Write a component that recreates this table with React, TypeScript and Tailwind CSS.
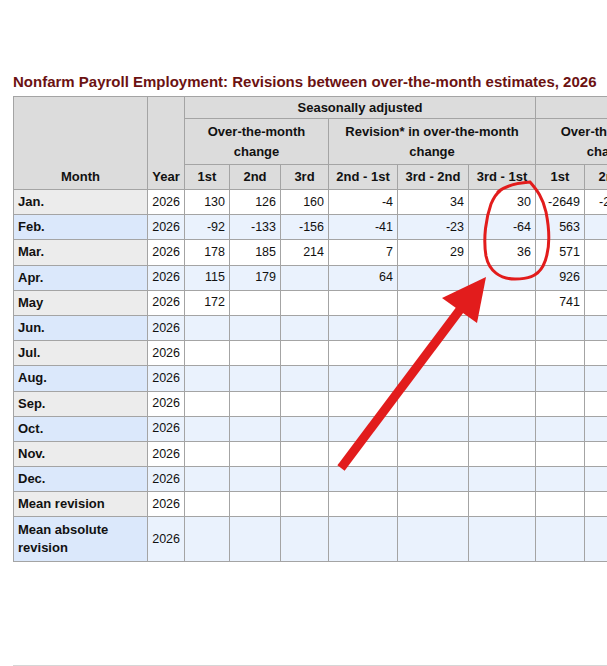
type Row = {
  month: string;
  sa: string[];
  nsa: string[];
  tall?: boolean;
};

const blank = ["", "", "", "", "", ""];

const rows: Row[] = [
  { month: "Jan.", sa: ["130", "126", "160", "-4", "34", "30"], nsa: ["-2649", "-2653", "", "-4", "", ""] },
  { month: "Feb.", sa: ["-92", "-133", "-156", "-41", "-23", "-64"], nsa: ["563", "572", "", "9", "", ""] },
  { month: "Mar.", sa: ["178", "185", "214", "7", "29", "36"], nsa: ["571", "590", "", "19", "", ""] },
  { month: "Apr.", sa: ["115", "179", "", "64", "", ""], nsa: ["926", "988", "", "62", "", ""] },
  { month: "May", sa: ["172", "", "", "", "", ""], nsa: ["741", "", "", "", "", ""] },
  { month: "Jun.", sa: blank, nsa: blank },
  { month: "Jul.", sa: blank, nsa: blank },
  { month: "Aug.", sa: blank, nsa: blank },
  { month: "Sep.", sa: blank, nsa: blank },
  { month: "Oct.", sa: blank, nsa: blank },
  { month: "Nov.", sa: blank, nsa: blank },
  { month: "Dec.", sa: blank, nsa: blank },
  { month: "Mean revision", sa: blank, nsa: blank },
  { month: "Mean absolute revision", sa: blank, nsa: blank, tall: true },
];

const colWidths = [134, 37, 45, 51, 48, 69, 71, 67, 49, 51, 48, 69, 71, 67];
const subHeads = ["1st", "2nd", "3rd", "2nd - 1st", "3rd - 2nd", "3rd - 1st"];

const th = "border border-[#a4a4a4] bg-[#dcdcdc] font-bold text-[13px] text-[#111] text-center";
const td = "border border-[#a4a4a4] text-right pr-[4px] text-[12.5px] text-[#111]";

function Annotations() {
  return (
    <svg
      className="absolute left-0 top-0 pointer-events-none"
      width="607"
      height="666"
      viewBox="0 0 607 666"
    >
      {/* circle around the 3rd - 1st figures */}
      <path
        d="M498 192 C506 185 517 183 530 182 C537 190 543 198 546 212 C550 232 550 252 543 266 C537 277 527 279 515 279 C500 279 489 271 486 256 C483 238 486 218 491 204 C494 197 497 193 500 191"
        fill="none"
        stroke="#e21c1c"
        strokeWidth="3"
        strokeLinecap="round"
      />
      {/* arrow pointing at it */}
      <line x1="341" y1="468" x2="462" y2="307" stroke="#e21c1c" strokeWidth="9" />
      <polygon points="442,298 486,277 477,323" fill="#e21c1c" />
    </svg>
  );
}

export default function App() {
  return (
    <div
      className="relative w-[607px] h-[666px] overflow-hidden bg-white"
      style={{ fontFamily: '"Liberation Sans", Arial, sans-serif' }}
    >
      <div className="pt-[73px] pl-[13px]">
        <h2 className="h-[18px] leading-[18px] text-[15px] font-bold text-[#6b1212] whitespace-nowrap mb-[5px]">
          Nonfarm Payroll Employment: Revisions between over-the-month estimates, 2026
        </h2>

        <table className="border-collapse table-fixed w-[877px]">
          <colgroup>
            {colWidths.map((w, i) => (
              <col key={i} style={{ width: w }} />
            ))}
          </colgroup>
          <thead>
            <tr className="h-[22px]">
              <th rowSpan={3} className={`${th} align-bottom pb-[3px]`}>
                Month
              </th>
              <th rowSpan={3} className={`${th} align-bottom pb-[3px]`}>
                Year
              </th>
              <th colSpan={6} className={th}>
                Seasonally adjusted
              </th>
              <th colSpan={6} className={th}>
                Not seasonally adjusted
              </th>
            </tr>
            <tr className="h-[46px]">
              {[0, 1].map((k) => (
                <>
                  <th key={`a${k}`} colSpan={3} className={`${th} leading-[20px] px-4`}>
                    Over-the-month change
                  </th>
                  <th key={`b${k}`} colSpan={3} className={`${th} leading-[20px] px-4`}>
                    Revision* in over-the-month change
                  </th>
                </>
              ))}
            </tr>
            <tr className="h-[25px]">
              {[...subHeads, ...subHeads].map((s, i) => (
                <th key={i} className={`${th} whitespace-nowrap`}>
                  {s}
                </th>
              ))}
            </tr>
          </thead>
          <tbody>
            {rows.map((r, i) => {
              const even = i % 2 === 1;
              const cellBg = even ? "bg-[#eaf2fd]" : "bg-white";
              return (
                <tr key={r.month} className={r.tall ? "h-[45px]" : "h-[25.2px]"}>
                  <th
                    className={`border border-[#a4a4a4] text-left pl-[4px] pr-2 font-bold text-[13px] leading-[18px] text-[#111] ${
                      even ? "bg-[#dbe8fb]" : "bg-[#ececec]"
                    }`}
                  >
                    {r.month}
                  </th>
                  <td className={`${td} ${cellBg}`}>2026</td>
                  {[...r.sa, ...r.nsa].map((v, j) => (
                    <td key={j} className={`${td} ${cellBg}`}>
                      {v}
                    </td>
                  ))}
                </tr>
              );
            })}
          </tbody>
        </table>

        <div className="mt-[103px] h-px w-[900px] bg-[#d6d6d6]" />
      </div>

      <Annotations />
    </div>
  );
}
